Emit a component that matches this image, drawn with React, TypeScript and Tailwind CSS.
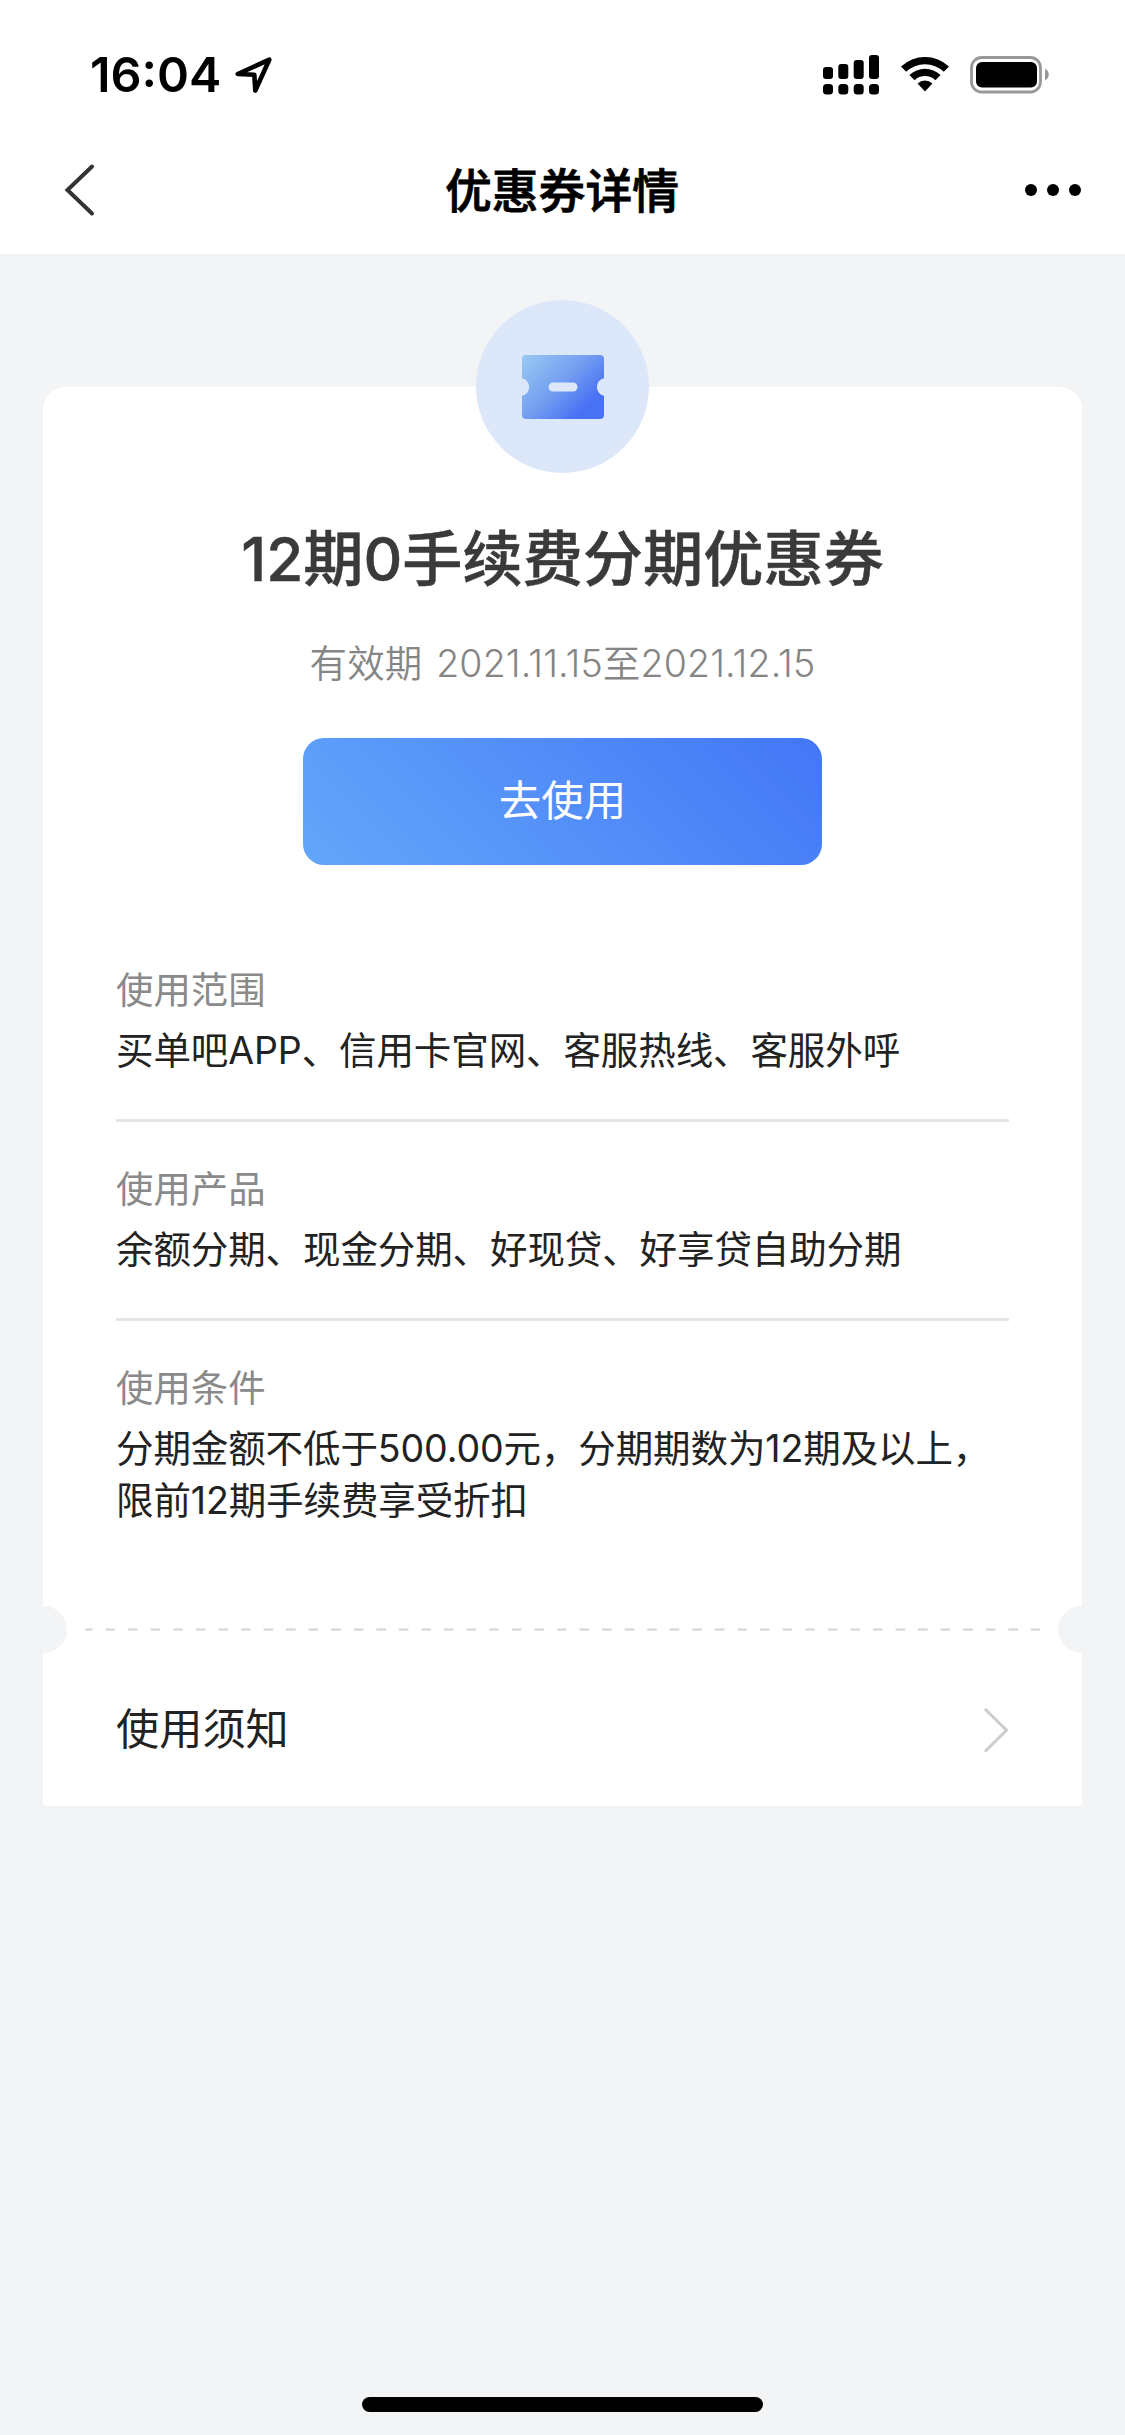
interface Section {
  label: string
  lines: string[]
}

const sections: Section[] = [
  { label: '使用范围', lines: ['买单吧APP、信用卡官网、客服热线、客服外呼'] },
  { label: '使用产品', lines: ['余额分期、现金分期、好现贷、好享贷自助分期'] },
  { label: '使用条件', lines: ['分期金额不低于500.00元，分期期数为12期及以上，', '限前12期手续费享受折扣'] },
]

const signalBars = [
  { x: 0, y: 12 },
  { x: 15.3, y: 9 },
  { x: 30.7, y: 5 },
  { x: 46, y: 0 },
]

function StatusBar() {
  return (
    <div className="flex h-[127px] items-start justify-between pl-[90px] pr-[75px] pt-[55px]">
      <div className="flex items-start">
        <span className="w-[145px] whitespace-nowrap text-[48.5px] font-semibold leading-[40px] text-black">16:04</span>
        <svg className="mt-[1px]" width="38" height="39" viewBox="0 0 38 39" fill="none">
          <path d="M2.7 18 34.3 3.7 20.3 34.5 19.3 18.7Z" stroke="#000" strokeWidth="4.6" strokeLinejoin="round" />
        </svg>
      </div>
      <div className="flex items-start">
        <svg width="56" height="40" viewBox="0 0 56 40">
          {signalBars.map((bar) => (
            <g key={bar.x}>
              <rect x={bar.x} y={bar.y} width="10" height={24 - bar.y} rx="3" />
              <rect x={bar.x} y="29" width="10" height="10.5" rx="3.5" />
            </g>
          ))}
        </svg>
        <svg className="ml-[21px] mt-[1px]" width="50" height="37" viewBox="0 0 50 37">
          <path d="M1 10.5A35 35 0 0 1 49 10.5L43.8 15.8A27.4 27.4 0 0 0 6.2 15.8Z" />
          <path d="M9.4 19A22.8 22.8 0 0 1 40.6 19L35.4 24.2A15.2 15.2 0 0 0 14.6 24.2Z" />
          <path d="M17.6 27.4A11 11 0 0 1 32.4 27.4L25 35.5Z" />
        </svg>
        <svg className="ml-[20px] mt-[1px]" width="80" height="38" viewBox="0 0 80 38">
          <rect x="1.5" y="1.5" width="69" height="34.5" rx="10" fill="none" stroke="#999" strokeWidth="2.8" />
          <rect x="6" y="6" width="61" height="25.5" rx="6" />
          <path d="M75 12.5C80 15 80 22 75 24.5Z" fill="#999" />
        </svg>
      </div>
    </div>
  )
}

function NavBar() {
  return (
    <div className="grid h-[127px] grid-cols-[1fr_auto_1fr] items-center pl-[64px] pr-[44px]">
      <svg className="-mt-px" width="50" height="54" viewBox="0 0 50 54" fill="none">
        <path d="M28 3.5 3.5 27 28 50.5" stroke="#333" strokeWidth="4" strokeLinecap="round" />
      </svg>
      <h1 className="-ml-[21px] text-[46.8px] font-medium leading-[60px] text-black [-webkit-text-stroke:0.8px_#000]">
        优惠券详情
      </h1>
      <div className="-mt-px flex justify-end gap-[10px]">
        <span className="size-3 rounded-full bg-black" />
        <span className="size-3 rounded-full bg-black" />
        <span className="size-3 rounded-full bg-black" />
      </div>
    </div>
  )
}

function CouponBadge() {
  return (
    <div className="-mt-[87px] flex size-[173px] items-center justify-center rounded-full bg-[#dce7f9]">
      <svg width="82" height="64" viewBox="0 0 82 64">
        <defs>
          <linearGradient id="coupon" x1="6" y1="0" x2="66" y2="60" gradientUnits="userSpaceOnUse">
            <stop offset="0" stopColor="#96c6f2" />
            <stop offset="0.5" stopColor="#749ff1" />
            <stop offset="0.92" stopColor="#4971f4" />
          </linearGradient>
        </defs>
        <path
          d="M4 0H78Q82 0 82 4V23.2A9 9 0 0 0 82 40.8V60Q82 64 78 64H4Q0 64 0 60V40.8A9 9 0 0 0 0 23.2V4Q0 0 4 0Z"
          fill="url(#coupon)"
        />
        <rect x="26.5" y="27.5" width="29" height="9" rx="4.5" fill="#dce7f9" />
      </svg>
    </div>
  )
}

function SectionItem({ label, lines }: Section) {
  return (
    <section className="h-[199px] border-b-[3px] border-[#e6e6e6] last:h-auto last:border-b-0">
      <h3 className="pt-[40px] text-[37.4px] leading-[55px] text-[#8a8a8a]">{label}</h3>
      <div className="pt-[7px] text-[37.5px] leading-[52px] tracking-[-0.1px] text-[#222]">
        {lines.map((line) => (
          <p key={line} className="whitespace-nowrap">{line}</p>
        ))}
      </div>
    </section>
  )
}

function Divider() {
  return (
    <div className="flex h-[48px] items-center justify-between">
      <div className="h-[47px] w-[24px] rounded-r-full bg-gray-100" />
      <svg width="955" height="3" viewBox="0 0 955 3">
        <line x1="0" y1="1.5" x2="955" y2="1.5" stroke="#d4d4d4" strokeWidth="2" strokeDasharray="9.5 13.07" strokeDashoffset="2" />
      </svg>
      <div className="h-[47px] w-[24px] rounded-l-full bg-gray-100" />
    </div>
  )
}

export default function App() {
  return (
    <div className="flex h-[2435px] w-[1125px] flex-col overflow-hidden bg-gray-100 font-['Inter','Noto_Sans_CJK_SC',sans-serif]">
      <header className="bg-white">
        <StatusBar />
        <NavBar />
      </header>

      <main className="mx-[43px] mt-[133px] flex h-[1419px] flex-col rounded-t-[22px] rounded-b-[4px] bg-white">
        <div className="flex flex-col items-center">
          <CouponBadge />
          <h2 className="mt-[51px] whitespace-nowrap text-[60.2px] font-medium leading-[72px] text-[#3a3a3a] [-webkit-text-stroke:0.5px_#3a3a3a]">
            12期0手续费分期优惠券
          </h2>
          <p className="mt-[42px] whitespace-nowrap text-[37.5px] font-[350] leading-[52px] tracking-[0.15px] text-[#858585] [word-spacing:3px]">
            有效期 2021.11.15至2021.12.15
          </p>
          <button className="mt-[48px] h-[127px] w-[519px] rounded-[21px] bg-[linear-gradient(45deg,#63a7fa,#4376f7)] pb-[2px] text-[42.5px] text-white">
            去使用
          </button>
        </div>

        <div className="mt-[58px] h-[682px] px-[73px]">
          {sections.map((section) => (
            <SectionItem key={section.label} {...section} />
          ))}
        </div>

        <Divider />

        <div className="mt-[41px] flex h-[70px] items-center justify-between px-[73px]">
          <span className="text-[43.2px] text-[#222]">使用须知</span>
          <svg className="mt-px" width="26" height="46" viewBox="0 0 26 46" fill="none">
            <path d="M2 2 23.5 23.2 2 44.5" stroke="#ccc" strokeWidth="3" />
          </svg>
        </div>
      </main>

      <div className="mx-auto mt-auto mb-[23px] h-[15px] w-[401px] rounded-full bg-black" />
    </div>
  )
}
